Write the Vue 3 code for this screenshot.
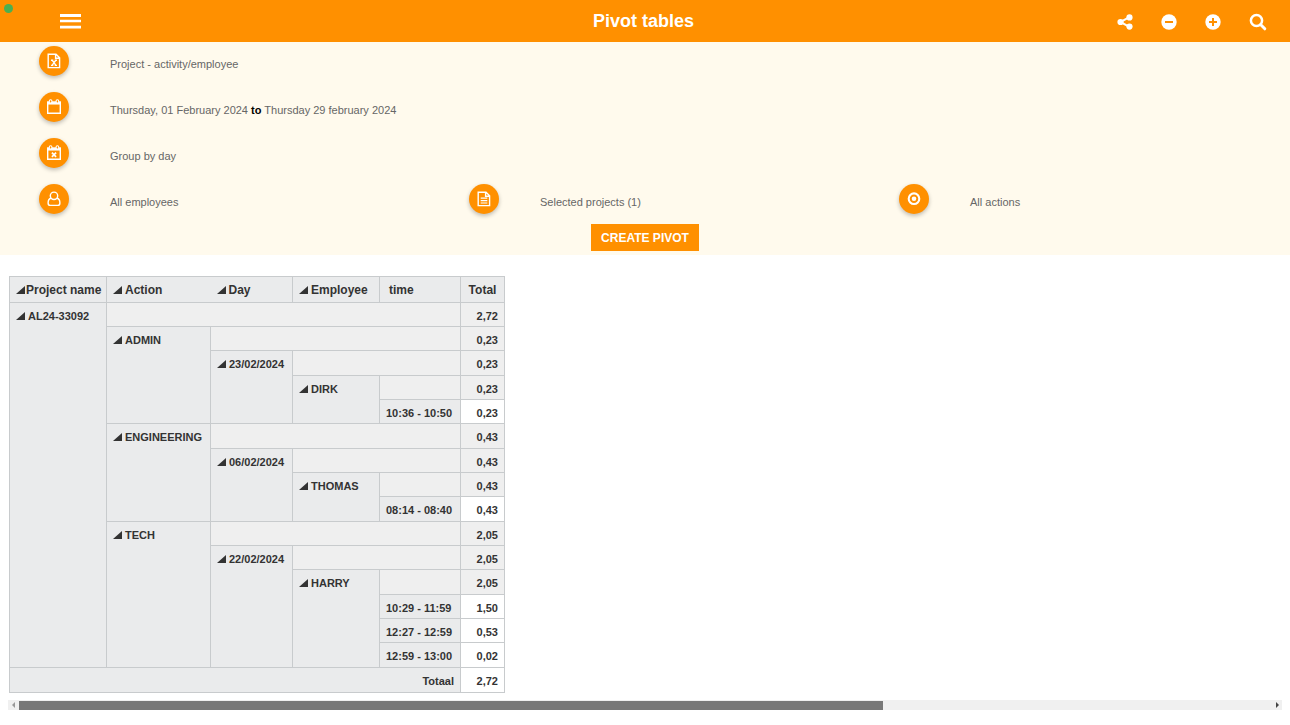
<script setup>
import { reactive } from 'vue'

const filters = [
  { icon: 'excel', text: 'Project - activity/employee', row: true },
  { icon: 'calendar', text: 'Thursday, 01 February 2024', to: 'Thursday 29 february 2024', row: true },
  { icon: 'calendar-x', text: 'Group by day', row: true },
  { icon: 'user', text: 'All employees' },
  { icon: 'file', text: 'Selected projects (1)' },
  { icon: 'target', text: 'All actions' }
]

const columns = [
  { name: 'Project name', toggle: true, cls: 'tight' },
  { name: 'Action', toggle: true, cls: 'open-right' },
  { name: 'Day', toggle: true, cls: 'open-left' },
  { name: 'Employee', toggle: true },
  { name: 'time', cls: 'time' },
  { name: 'Total', cls: 'total' }
]

const project = {
  label: 'AL24-33092', total: '2,72', children: [
    { label: 'ADMIN', total: '0,23', children: [
      { label: '23/02/2024', total: '0,23', children: [
        { label: 'DIRK', total: '0,23', children: [
          { label: '10:36 - 10:50', total: '0,23' }
        ] }
      ] }
    ] },
    { label: 'ENGINEERING', total: '0,43', children: [
      { label: '06/02/2024', total: '0,43', children: [
        { label: 'THOMAS', total: '0,43', children: [
          { label: '08:14 - 08:40', total: '0,43' }
        ] }
      ] }
    ] },
    { label: 'TECH', total: '2,05', children: [
      { label: '22/02/2024', total: '2,05', children: [
        { label: 'HARRY', total: '2,05', children: [
          { label: '10:29 - 11:59', total: '1,50' },
          { label: '12:27 - 12:59', total: '0,53' },
          { label: '12:59 - 13:00', total: '0,02' }
        ] }
      ] }
    ] }
  ]
}

function flatten(node, depth = 0) {
  const below = (node.children || []).flatMap(child => flatten(child, depth + 1))
  return [{
    label: node.label,
    total: node.total,
    leaf: !node.children,
    rowspan: below.length + 1,
    colspan: 4 - depth
  }, ...below]
}

const rows = flatten(project)
const scroll = reactive({ thumb: 69 })
</script>

<template>
  <div class="page">
    <header class="bar">
      <span class="status"></span>
      <button class="plain menu" aria-label="Menu">
        <svg width="21" height="15" viewBox="0 0 21 15"><path d="M0 0h21v3H0zM0 5.800h21v2.400H0zM0 11.800h21v2.600H0z" fill="#fff" /></svg>
      </button>
      <h1>Pivot tables</h1>
      <nav class="tools">
        <button class="plain" aria-label="Share">
          <svg width="16" height="16" viewBox="0 0 16 16"><path d="M12.4 3.2 3.4 8l9 4.800" fill="none" stroke="#fff" stroke-width="2" /><g fill="#fff"><circle cx="12.500" cy="3.400" r="3.100" /><circle cx="3.500" cy="8" r="3.100" /><circle cx="12.500" cy="12.600" r="3.100" /></g></svg>
        </button>
        <button class="plain" aria-label="Zoom out">
          <svg width="16" height="16" viewBox="0 0 16 16"><circle cx="8" cy="8" r="7.700" fill="#fff" /><path d="M4 8h8" stroke="#ff9000" stroke-width="2" /></svg>
        </button>
        <button class="plain" aria-label="Zoom in">
          <svg width="16" height="16" viewBox="0 0 16 16"><circle cx="8" cy="8" r="7.700" fill="#fff" /><path d="M4 8h8M8 4v8" stroke="#ff9000" stroke-width="2" /></svg>
        </button>
        <button class="plain" aria-label="Search">
          <svg width="18" height="18" viewBox="0 0 18 18" fill="none" stroke="#fff"><circle cx="7.500" cy="7.500" r="5.600" stroke-width="2.500" /><path d="m11.800 11.800 4 4" stroke-width="3" stroke-linecap="round" /></svg>
        </button>
      </nav>
    </header>

    <section class="filters">
      <div class="grid">
        <div v-for="f in filters" :key="f.icon" class="filter" :class="{ wide: f.row }">
          <button class="round" :aria-label="f.text">
            <svg width="16" height="16" viewBox="0 0 16 16" fill="none" stroke="#fff" stroke-width="1.400">
              <template v-if="f.icon === 'excel' || f.icon === 'file'">
                <path d="M2.200 1.200h7.800l3.600 3.600v9.800H2.200zM9.600 1.200v4h4" />
                <path v-if="f.icon === 'excel'" d="M5 7.200h2.300M8.700 7.200H11M5 12.400h2.300M8.700 12.400H11M6.200 7.200l3.700 5.200M9.900 7.200l-3.800 5.200" />
                <path v-else d="M4.700 7.200h6.600M4.700 9.600h6.600M4.700 12h6.600" stroke-width="1.200" />
              </template>
              <template v-else-if="f.icon === 'calendar' || f.icon === 'calendar-x'">
                <path d="M1.700 4.500h12.600v9.800H1.700z" />
                <path d="M1 2.300h14v3.100H1z" fill="#fff" stroke="none" />
                <rect x="3.300" y=".8" width="2.600" height="3.200" rx="1.200" fill="#ff9000" stroke-width="1.100" />
                <rect x="10.100" y=".8" width="2.600" height="3.200" rx="1.200" fill="#ff9000" stroke-width="1.100" />
                <path v-if="f.icon === 'calendar-x'" d="m5.900 7.700 4.200 4.200M10.100 7.700l-4.200 4.200" stroke-width="1.700" />
              </template>
              <template v-else-if="f.icon === 'user'">
                <path d="M5 7.300C3 7.700 2.100 9.400 2.100 11.900c0 1.700.9 2.500 2.200 2.500h7.400c1.300 0 2.200-.8 2.200-2.500 0-2.500-.9-4.200-2.900-4.600" />
                <circle cx="8" cy="4.800" r="3.700" />
              </template>
              <template v-else>
                <circle cx="8" cy="7.700" r="5.300" stroke-width="2.100" />
                <circle cx="8" cy="7.700" r="2.300" fill="#fff" stroke="none" />
              </template>
            </svg>
          </button>
          <span class="value">{{ f.text }}<template v-if="f.to">{{ ' ' }}<b>to</b> {{ f.to }}</template></span>
        </div>
      </div>
      <button class="create">CREATE PIVOT</button>
    </section>

    <main>
      <table>
        <colgroup>
          <col class="c-project"><col class="c-action"><col class="c-day"><col class="c-employee"><col class="c-time"><col class="c-total">
        </colgroup>
        <thead>
          <tr>
            <th v-for="c in columns" :key="c.name" scope="col" :class="c.cls">
              <button v-if="c.toggle" class="plain toggle" :aria-label="'Collapse ' + c.name"><svg width="9" height="8" viewBox="0 0 9 8"><path d="M9 0v8H0z" fill="#333" /></svg></button>{{ c.name }}
            </th>
          </tr>
        </thead>
        <tbody>
          <tr v-for="(r, i) in rows" :key="i">
            <th scope="row" :rowspan="r.rowspan">
              <button v-if="!r.leaf" class="plain toggle" :aria-label="'Collapse ' + r.label"><svg width="9" height="8" viewBox="0 0 9 8"><path d="M9 0v8H0z" fill="#333" /></svg></button>{{ r.label }}
            </th>
            <td v-if="!r.leaf" class="sub" :colspan="r.colspan"></td>
            <td :class="{ sub: !r.leaf }">{{ r.total }}</td>
          </tr>
        </tbody>
        <tfoot>
          <tr>
            <th scope="row" colspan="5">Totaal</th>
            <td>2,72</td>
          </tr>
        </tfoot>
      </table>

      <div class="scroller">
        <button class="plain arrow" aria-label="Scroll left"><svg width="4" height="6" viewBox="0 0 4 6"><path d="M3 0v6L0 3z" fill="#999" /></svg></button>
        <div class="track"><div class="thumb" :style="{ width: scroll.thumb + '%' }"></div></div>
        <button class="plain arrow" aria-label="Scroll right"><svg width="4" height="6" viewBox="0 0 4 6"><path d="M1 0v6l3-3z" fill="#444" /></svg></button>
      </div>
    </main>
  </div>
</template>

<style>
body {
  background: #fff;
}
</style>

<style scoped>
.page {
  font-family: "Liberation Sans", Arial, sans-serif;
  color: #333;
}
button {
  font-family: inherit;
  border: 0;
  padding: 0;
  cursor: pointer;
}
svg {
  display: block;
}
.plain {
  background: none;
}
.bar {
  position: relative;
  display: grid;
  grid-template-columns: 1fr auto 1fr;
  align-items: center;
  height: 42px;
  padding: 0 23px 0 60px;
  background: #ff9000;
}
.status {
  position: absolute;
  left: 4px;
  top: 4px;
  width: 9px;
  height: 9px;
  border-radius: 50%;
  background: #4caf50;
}
.menu {
  justify-self: start;
}
h1 {
  margin: 0;
  padding-right: 40px;
  font-size: 18px;
  line-height: 24px;
  color: #fff;
}
.tools {
  display: flex;
  justify-content: flex-end;
  align-items: center;
  gap: 28px;
  padding-top: 2px;
}
.filters {
  padding: 4px 0;
  background: #fffaed;
}
.grid {
  display: grid;
  grid-template-columns: repeat(3, 1fr);
  grid-auto-rows: 30px;
  row-gap: 16px;
}
.filter {
  display: flex;
  align-items: center;
  gap: 41px;
  padding-left: 39px;
}
.wide {
  grid-column: 1 / -1;
}
.round {
  display: flex;
  align-items: center;
  justify-content: center;
  width: 30px;
  height: 30px;
  border-radius: 50%;
  background: #ff9000;
  box-shadow: 0 2px 4px rgba(0, 0, 0, 0.25);
}
.value {
  padding-top: 5px;
  font-size: 11px;
  line-height: 16px;
  color: #666;
}
.value b {
  color: #000;
}
.create {
  display: block;
  margin: 10px auto 0;
  padding: 2px 10px 0;
  font-size: 12px;
  font-weight: bold;
  line-height: 25px;
  color: #fff;
  background: #ff9000;
}
main {
  padding: 21px 8px 0;
}
table {
  width: 496px;
  margin-left: 1px;
  table-layout: fixed;
  border-collapse: collapse;
  font-size: 11px;
  line-height: 14px;
}
.c-project {
  width: 97px;
}
.c-action {
  width: 104px;
}
.c-day {
  width: 82px;
}
.c-employee {
  width: 87px;
}
.c-time {
  width: 81px;
}
.c-total {
  width: 44px;
}
th,
td {
  padding: 6px 6px 3px;
  border: 1px solid #c8cbcd;
  background: #eaebec;
  font-weight: bold;
  text-align: left;
  vertical-align: top;
  white-space: nowrap;
}
td {
  background: #fff;
  text-align: right;
}
td.sub {
  background: #efefef;
}
tbody tr:nth-child(3n) > *,
tfoot tr > * {
  height: 15px;
}
tfoot th {
  text-align: right;
}
thead th {
  height: 16px;
  padding: 5px 6px 4px;
  font-size: 12px;
  line-height: 16px;
}
thead .open-right {
  border-right: none;
}
thead .open-left {
  border-left: none;
}
thead .time {
  padding-left: 9px;
}
thead .total {
  text-align: center;
}
.toggle {
  margin-right: 3px;
}
.tight .toggle {
  margin-right: 1px;
}
.scroller {
  display: flex;
  align-items: center;
  height: 10px;
  margin-top: 7px;
  background: #f0f0f0;
}
.arrow {
  display: flex;
  justify-content: center;
  width: 11px;
}
.track {
  flex: 1;
}
.thumb {
  height: 9px;
  background: #787878;
}
</style>
